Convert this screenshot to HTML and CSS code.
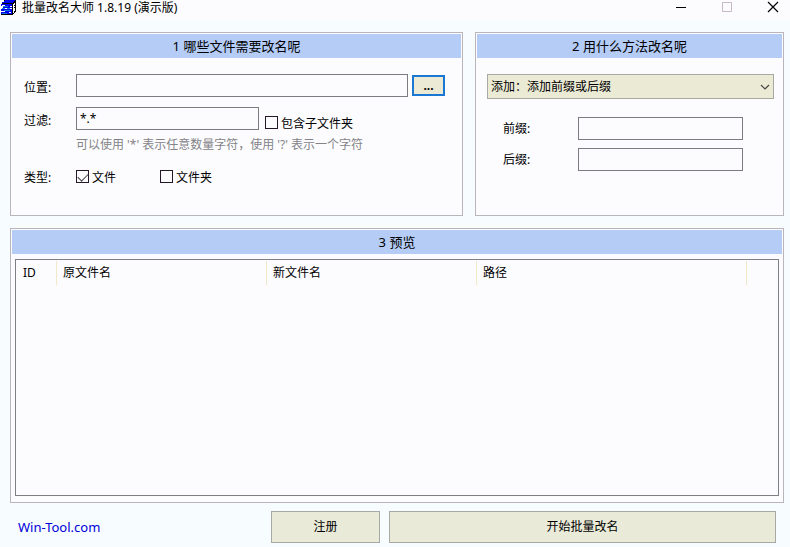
FILE: index.html
```html
<!DOCTYPE html>
<html lang="zh-CN">
<head>
    <meta charset="UTF-8">
    <meta name="viewport" content="width=device-width, initial-scale=1.0">
    <title>批量改名大师</title>
    <link rel="stylesheet" href="styles.css">
</head>
<body>
    <header class="titlebar">
        <svg class="app-icon" width="16" height="15" viewBox="0 0 16 15" shape-rendering="crispEdges">
            <path fill="#000" d="M4 0h12v12h-1v1h-1v1h-1v1H1v-1h11V4H2V2h2z"/>
            <path fill="#0000f0" d="M5 0h10v1h-1v1h-1v1H2V2h2V1h1zM1 4h11v2H1zM3 6h9v2H3zM1 9h11v2H1zM4 11h8v1H4zM1 12h11v2H1z"/>
            <path fill="#1878d8" d="M3 6h5v1H3zM2 8h8v1H2zM4 10h6v1H4zM2 13h5v1H2z"/>
            <path fill="#fff" d="M2 5h3v1H2zM10 6h2v1h-2zM1 8h1v1H1zM5 8h2v1H5zM1 11h4v1H1zM9 12h2v1H9zM13 4h1v9h-1zM14 3h1v2h-1zM14 6h1v1h-1zM14 8h1v3h-1z"/>
        </svg>
        <h1>批量改名大师 1.8.19 (演示版)</h1>
        <div class="window-controls">
            <button type="button" aria-label="最小化">
                <svg width="12" height="12" viewBox="0 0 12 12"><path d="M1 6.5h10" stroke="#000"/></svg>
            </button>
            <button type="button" aria-label="最大化" disabled>
                <svg width="12" height="12" viewBox="0 0 12 12"><path d="M1.5 1.5h9v9h-9z" fill="none" stroke="#c8b8c4"/></svg>
            </button>
            <button type="button" aria-label="关闭">
                <svg width="12" height="12" viewBox="0 0 12 12"><path d="M1 1l10 10M11 1L1 11" stroke="#000" stroke-width="1.2"/></svg>
            </button>
        </div>
    </header>

    <main>
        <div class="top">
            <section class="panel">
                <h2>1 哪些文件需要改名呢</h2>
                <div class="source">
                    <div class="row">
                        <label class="name" for="location">位置:</label>
                        <input class="text grow" type="text" id="location">
                        <button class="browse" type="button">...</button>
                    </div>
                    <div class="row">
                        <label class="name" for="filter">过滤:</label>
                        <input class="text filter" type="text" id="filter" value="*.*">
                        <label class="check low"><input type="checkbox">包含子文件夹</label>
                    </div>
                    <p class="hint">可以使用 '*' 表示任意数量字符，使用 '?' 表示一个字符</p>
                    <div class="row types">
                        <span class="name">类型:</span>
                        <label class="check type"><input type="checkbox" checked>文件</label>
                        <label class="check type"><input type="checkbox">文件夹</label>
                    </div>
                </div>
            </section>

            <section class="panel">
                <h2>2 用什么方法改名呢</h2>
                <div class="method">
                    <div class="select">
                        <select aria-label="改名方法">
                            <option>添加：添加前缀或后缀</option>
                        </select>
                        <svg width="10" height="6" viewBox="0 0 10 6"><path d="M1 1l4 4 4-4" fill="none" stroke="#444" stroke-width="1.2"/></svg>
                    </div>
                    <div class="affixes">
                        <label for="prefix">前缀:</label>
                        <input class="text" type="text" id="prefix">
                        <label for="suffix">后缀:</label>
                        <input class="text" type="text" id="suffix">
                    </div>
                </div>
            </section>
        </div>

        <section class="panel preview">
            <h2>3 预览</h2>
            <div class="list">
                <table>
                    <thead>
                        <tr>
                            <th class="col-id">ID</th>
                            <th class="col-file">原文件名</th>
                            <th class="col-file">新文件名</th>
                            <th class="col-path">路径</th>
                            <td></td>
                        </tr>
                    </thead>
                    <tbody></tbody>
                </table>
            </div>
        </section>
    </main>

    <footer>
        <a href="#">Win-Tool.com</a>
        <button class="btn" type="button">注册</button>
        <button class="btn start" type="button">开始批量改名</button>
    </footer>
</body>
</html>
```

FILE: styles.css
```css
* {
    box-sizing: border-box;
}

body {
    display: flex;
    flex-direction: column;
    min-height: 100vh;
    margin: 0;
    background: #f7fcfe;
    color: #000;
    font: 12px/16px "Noto Sans", "Noto Sans CJK SC", sans-serif;
}

input, select, button {
    font: inherit;
    color: inherit;
}

/* title bar */
.titlebar {
    display: flex;
    align-items: flex-start;
    height: 20px;
    padding-right: 11px;
    background: #fcfcfe;
}

.titlebar h1 {
    margin: 0 0 0 6px;
    font-size: 12px;
    line-height: 15px;
    font-weight: normal;
}

.window-controls {
    display: flex;
    gap: 34px;
    margin-left: auto;
    padding-top: 1px;
}

.window-controls button {
    display: flex;
    padding: 0;
    border: 0;
    background: none;
}

/* panels */
main {
    display: flex;
    flex: 1;
    flex-direction: column;
    gap: 12px;
    padding: 12px 6px 8px 10px;
}

.top {
    display: grid;
    grid-template-columns: 453fr 309fr;
    gap: 12px;
}

.panel {
    padding: 1px;
    border: 1px solid #bab4bc;
    background: #fcfcfe;
}

.panel h2 {
    margin: 0;
    background: #b4ccf6;
    font-size: 13px;
    line-height: 24px;
    font-weight: normal;
    text-align: center;
}

.text {
    min-width: 0;
    height: 23px;
    padding: 0 3px;
    border: 1px solid #7c7c80;
    background: #fcfcfe;
}

/* 1: files */
.source {
    padding: 16px 16px 28px 12px;
}

.row {
    display: flex;
    align-items: center;
    margin-bottom: 10px;
}

.name {
    width: 52px;
    padding-top: 4px;
}

.grow {
    flex: 1;
}

.browse {
    width: 33px;
    height: 21px;
    margin-left: 4px;
    padding: 0;
    border: 2px solid #1878d4;
    background: #ece9d4;
    font-weight: bold;
    line-height: 16px;
}

.filter {
    width: 183px;
}

.check {
    display: flex;
    align-items: flex-start;
    gap: 3px;
}

.low {
    align-self: flex-end;
    margin: 0 0 -2px 6px;
}

.check input {
    appearance: none;
    width: 13px;
    height: 13px;
    margin: 0;
    border: 1px solid #241828;
    background: #fcfcfe;
}

.check input:checked::before {
    content: "";
    display: block;
    width: 9px;
    height: 5px;
    margin: 2px 0 0 1px;
    border: solid #444;
    border-width: 0 0 1px 1px;
    transform: rotate(-45deg);
}

.hint {
    margin: -3px 0 0 52px;
    color: #848488;
}

.types {
    align-items: flex-start;
    margin: 17px 0 0;
}

.types .name {
    padding-top: 0;
}

.type {
    width: 84px;
}

/* 2: method */
.method {
    padding: 16px 8px 28px 10px;
}

.select {
    position: relative;
}

.select select {
    appearance: none;
    display: block;
    width: 100%;
    height: 25px;
    padding: 0 20px 0 3px;
    border: 1px solid #a8a8a4;
    border-radius: 0;
    background: #ebead4;
}

.select svg {
    position: absolute;
    top: 10px;
    right: 4px;
    pointer-events: none;
}

.affixes {
    display: grid;
    grid-template-columns: 75px 1fr;
    gap: 8px 0;
    align-items: center;
    padding: 18px 31px 0 16px;
}

/* 3: preview */
.preview {
    display: flex;
    flex: 1;
    flex-direction: column;
}

.list {
    flex: 1;
    margin: 5px 3px;
    border: 1px solid #7c8084;
}

table {
    width: 100%;
    margin-top: 1px;
    border-spacing: 0;
    table-layout: fixed;
}

th {
    height: 24px;
    padding: 0 6px;
    border-right: 1px solid #f0e8c8;
    font-weight: normal;
    text-align: left;
}

.col-id {
    width: 41px;
    padding-left: 7px;
}

.col-file {
    width: 210px;
}

.col-path {
    width: 270px;
}

/* bottom bar */
footer {
    display: flex;
    align-items: center;
    padding: 0 14px 4px 18px;
}

footer a {
    width: 253px;
    color: #0000d8;
    font-size: 13px;
    text-decoration: none;
}

.btn {
    width: 109px;
    height: 32px;
    padding: 0;
    border: 1px solid #a8a8a4;
    background: #e9ebd8;
}

.start {
    flex: 1;
    margin-left: 9px;
}
```
